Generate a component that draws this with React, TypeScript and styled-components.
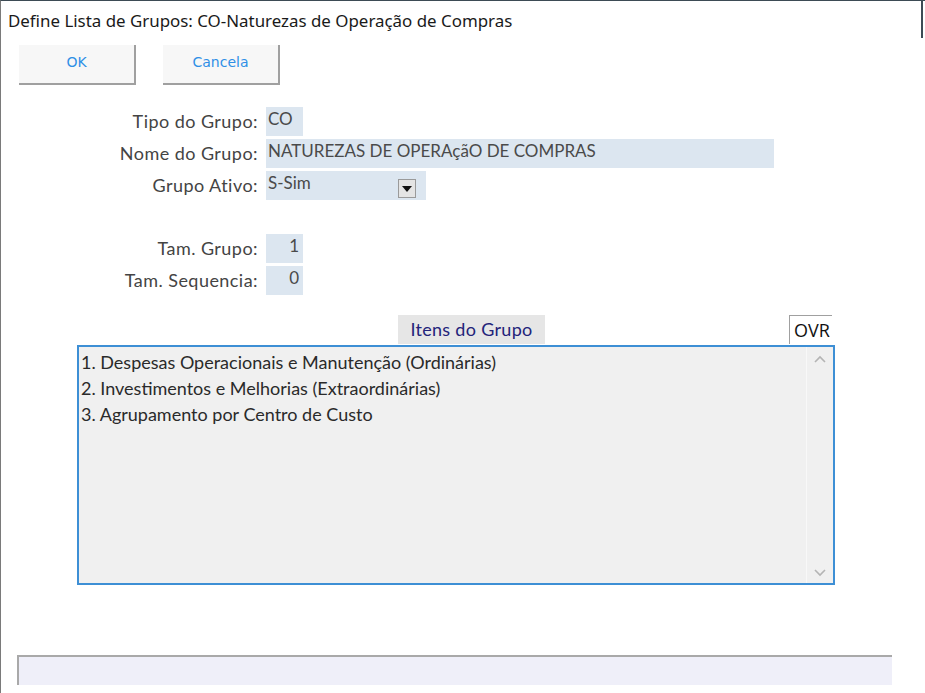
import React from "react";
import styled, { createGlobalStyle } from "styled-components";

const GlobalStyle = createGlobalStyle`
  html, body {
    margin: 0;
    padding: 0;
    background: #ffffff;
    overflow: hidden;
  }
`;

const Window = styled.div`
  width: 925px;
  height: 693px;
  box-sizing: border-box;
  border-top: 1px solid #3d4b55;
  border-left: 1px solid #7a7a7a;
  background: #ffffff;
  display: flex;
  flex-direction: column;
  font-family: "Lato", "Open Sans", sans-serif;
  color: #3a3a3a;
`;

const TitleBar = styled.div`
  height: 37px;
  display: flex;
  align-items: center;
  padding-left: 7px;
  font-family: "Noto Sans", "Open Sans", sans-serif;
  font-size: 16.9px;
  color: #1a1a1a;
  border-right: 2px solid #3d4b55;
  margin-right: 2px;
  padding-top: 2px;
  box-sizing: border-box;
`;

const Toolbar = styled.div`
  display: flex;
  gap: 27px;
  padding-left: 18px;
  margin-top: 7px;
`;

const ToolButton = styled.button`
  width: 117px;
  height: 40px;
  background: #f7f7f7;
  border: none;
  border-right: 2px solid #a0a0a0;
  border-bottom: 2px solid #a0a0a0;
  color: #2f8fe6;
  font-family: "DejaVu Sans", sans-serif;
  font-size: 14px;
  padding: 0 0 4px;
  cursor: pointer;
`;

const Form = styled.div`
  display: grid;
  grid-template-columns: 257px auto;
  column-gap: 8px;
  row-gap: 3px;
  margin-top: 22px;
  align-items: center;
`;

const Label = styled.div`
  text-align: right;
  font-size: 18px;
  letter-spacing: 0.45px;
  color: #444;
  padding-bottom: 2px;
`;

const Field = styled.div<{ $w: number; $align?: string }>`
  width: ${(p) => p.$w}px;
  height: 29px;
  box-sizing: border-box;
  background: #dce6f0;
  font-size: 17px;
  color: #4a4a4a;
  padding: 1px 4px 0 2px;
  display: flex;
  justify-content: ${(p) => (p.$align === "right" ? "flex-end" : "space-between")};
  position: relative;
`;

const Spacer = styled.div`
  grid-column: 1 / span 2;
  height: 28px;
`;

const DropButton = styled.div`
  position: absolute;
  left: 132px;
  top: 8px;
  width: 16px;
  height: 17px;
  border: 1px solid #9a9a9a;
  background: #e4e4e4;
  display: flex;
  align-items: center;
  justify-content: center;
`;

const ItemsHeaderRow = styled.div`
  display: flex;
  align-items: flex-end;
  margin-top: 19px;
  height: 30px;
`;

const ItemsTitle = styled.div`
  margin-left: 397px;
  width: 147px;
  height: 29px;
  background: #e6e6e6;
  color: #23237a;
  font-size: 18px;
  letter-spacing: 0.3px;
  display: flex;
  align-items: center;
  justify-content: center;
  padding-bottom: 2px;
  box-sizing: border-box;
`;

const OvrBox = styled.div`
  margin-left: 244px;
  width: 43px;
  height: 29px;
  box-sizing: border-box;
  border-left: 1px solid #a0a0a0;
  border-top: 1px solid #a0a0a0;
  font-family: "Open Sans", sans-serif;
  font-size: 18px;
  color: #111;
  display: flex;
  align-items: center;
  justify-content: center;
  padding-left: 2px;
`;

const ListBox = styled.div`
  margin-left: 76px;
  margin-top: 1px;
  width: 758px;
  height: 240px;
  box-sizing: border-box;
  border: 2px solid #3d8fd5;
  background: #f0f0f0;
  display: flex;
`;

const ListItems = styled.div`
  flex: 1;
  padding: 2px 0 0 2px;
  font-size: 18px;
  color: #2a2a2a;
  line-height: 26px;
`;

const ScrollTrack = styled.div`
  width: 26px;
  border-left: 1px solid #f8f8f8;
  display: flex;
  flex-direction: column;
  justify-content: space-between;
  align-items: center;
  padding: 8px 0 6px;
`;

const StatusBar = styled.div`
  margin-left: 16px;
  margin-top: 70px;
  width: 875px;
  height: 30px;
  box-sizing: border-box;
  border-top: 2px solid #a9a9a9;
  border-left: 2px solid #a9a9a9;
  background: #efeff9;
`;

const Chevron = ({ up }: { up?: boolean }) => (
  <svg width="12" height="8" viewBox="0 0 12 8">
    <path
      d={up ? "M1 7 L6 2 L11 7" : "M1 1 L6 6 L11 1"}
      fill="none"
      stroke="#b4b4b4"
      strokeWidth="1.6"
    />
  </svg>
);

const items = [
  "1. Despesas Operacionais e Manutenção (Ordinárias)",
  "2. Investimentos e Melhorias (Extraordinárias)",
  "3. Agrupamento por Centro de Custo",
];

export default function App() {
  return (
    <>
      <GlobalStyle />
      <Window>
        <TitleBar>Define Lista de Grupos: CO-Naturezas de Operação de Compras</TitleBar>
        <Toolbar>
          <ToolButton>OK</ToolButton>
          <ToolButton>Cancela</ToolButton>
        </Toolbar>
        <Form>
          <Label>Tipo do Grupo:</Label>
          <Field $w={37}>CO</Field>
          <Label>Nome do Grupo:</Label>
          <Field $w={508}>NATUREZAS DE OPERAçãO DE COMPRAS</Field>
          <Label>Grupo Ativo:</Label>
          <Field $w={160}>
            S-Sim
            <DropButton>
              <svg width="10" height="6" viewBox="0 0 10 6">
                <path d="M0 0 L10 0 L5 6 Z" fill="#111" />
              </svg>
            </DropButton>
          </Field>
          <Spacer />
          <Label>Tam. Grupo:</Label>
          <Field $w={37} $align="right">1</Field>
          <Label>Tam. Sequencia:</Label>
          <Field $w={37} $align="right">0</Field>
        </Form>
        <ItemsHeaderRow>
          <ItemsTitle>Itens do Grupo</ItemsTitle>
          <OvrBox>OVR</OvrBox>
        </ItemsHeaderRow>
        <ListBox>
          <ListItems>
            {items.map((it) => (
              <div key={it}>{it}</div>
            ))}
          </ListItems>
          <ScrollTrack>
            <Chevron up />
            <Chevron />
          </ScrollTrack>
        </ListBox>
        <StatusBar />
      </Window>
    </>
  );
}
